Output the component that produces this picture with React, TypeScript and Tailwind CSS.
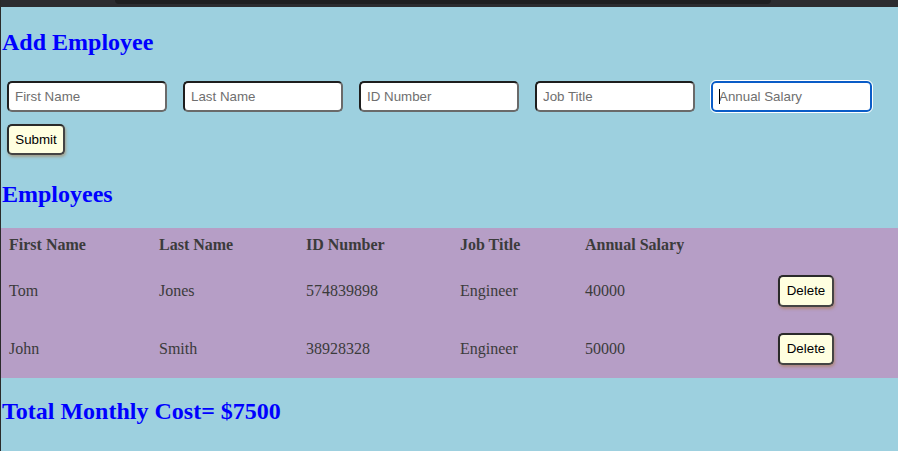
import React from "react";

const employees = [
  { first: "Tom", last: "Jones", id: "574839898", title: "Engineer", salary: "40000" },
  { first: "John", last: "Smith", id: "38928328", title: "Engineer", salary: "50000" },
];

const fields = ["First Name", "Last Name", "ID Number", "Job Title", "Annual Salary"];

const grid = "grid grid-cols-[150px_147px_154px_125px_193px_1fr]";

export default function App() {
  return (
    <div className="min-h-[451px] w-[898px] bg-[#9dd0df] font-['Liberation_Serif',serif] border-l border-[#2a2a2a]">
      {/* window chrome strip */}
      <div className="h-[7px] bg-[#2c2c30] flex">
        <div className="ml-[114px] w-[656px] h-[4px] bg-[#1f1f21] rounded-b-[4px]" />
      </div>

      <h2 className="mt-[21px] pl-[1px] text-[24px] leading-[28px] font-bold text-[#0000ff]">Add Employee</h2>

      <div className="mt-[25px] pl-[6px] flex gap-[16px]">
        {fields.map((f, i) => {
          const focused = i === fields.length - 1;
          return (
            <div key={f} className="relative">
              <input
                placeholder={f}
                className={
                  focused
                    ? "w-[161px] h-[31px] rounded-[5px] bg-white border-2 border-[#0a5cc7] outline outline-1 outline-white pl-[6px] font-['Liberation_Sans',Arial,sans-serif] text-[13.33px] placeholder:text-[#6f6f6f]"
                    : "w-[160px] h-[31px] rounded-[5px] bg-white border-2 border-t-[#1e1e1e] border-l-[#1e1e1e] border-b-[#6a6a6a] border-r-[#6a6a6a] pl-[6px] font-['Liberation_Sans',Arial,sans-serif] text-[13.33px] placeholder:text-[#6f6f6f]"
                }
              />
              {focused && <span className="absolute left-[8px] top-[8px] w-px h-[15px] bg-black" />}
            </div>
          );
        })}
      </div>

      <div className="mt-[12px] pl-[6px]">
        <button className="w-[58px] h-[31px] rounded-[5px] bg-[#ffffe0] border-2 border-t-[#2a2a2a] border-l-[#2a2a2a] border-b-[#444] border-r-[#444] shadow-[1px_2px_3px_rgba(170,120,70,0.55)] font-['Liberation_Sans',Arial,sans-serif] text-[13.33px] text-black">
          Submit
        </button>
      </div>

      <h2 className="mt-[25px] pl-[1px] text-[24px] leading-[28px] font-bold text-[#0000ff]">Employees</h2>

      <div className="mt-[20px] bg-[#b69ec6] text-[#3b3b3b] text-[16px]">
        <div className={`${grid} h-[34px] items-center font-bold`}>
          <div className="px-2">First Name</div>
          <div className="px-2">Last Name</div>
          <div className="px-2">ID Number</div>
          <div className="px-2">Job Title</div>
          <div className="px-2">Annual Salary</div>
          <div />
        </div>
        {employees.map((e) => (
          <div key={e.id} className={`${grid} h-[58px] items-center`}>
            <div className="px-2">{e.first}</div>
            <div className="px-2">{e.last}</div>
            <div className="px-2">{e.id}</div>
            <div className="px-2">{e.title}</div>
            <div className="px-2">{e.salary}</div>
            <div className="px-2">
              <button className="w-[56px] h-[32px] rounded-[5px] bg-[#ffffe0] border-2 border-t-[#2a2a2a] border-l-[#2a2a2a] border-b-[#444] border-r-[#444] shadow-[1px_2px_3px_rgba(170,120,70,0.55)] font-['Liberation_Sans',Arial,sans-serif] text-[13.33px] text-black">
                Delete
              </button>
            </div>
          </div>
        ))}
      </div>

      <h2 className="mt-[19px] pl-[1px] text-[24px] leading-[28px] font-bold text-[#0000ff]">Total Monthly Cost= $7500</h2>
    </div>
  );
}
